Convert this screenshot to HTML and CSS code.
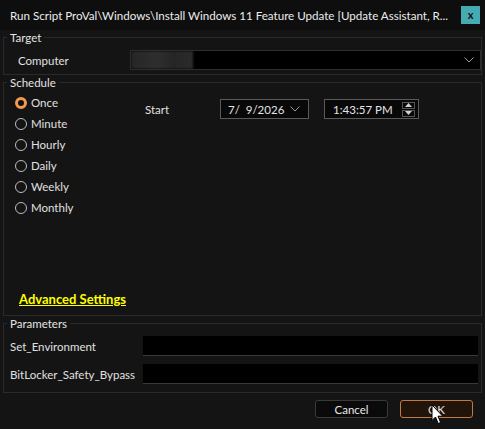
FILE: index.html
```html
<!DOCTYPE html>
<html lang="en">
<head>
    <meta charset="UTF-8">
    <title>Run Script</title>
    <link rel="stylesheet" href="styles.css">
</head>
<body>
    <div class="dialog">
        <!-- Title bar -->
        <div class="titlebar">
            <span class="title">Run Script ProVal\Windows\Install Windows 11 Feature Update [Update Assistant, R...</span>
            <span class="close-btn">x</span>
        </div>

        <!-- Target computer -->
        <fieldset class="group target">
            <legend>Target</legend>
            <div class="row">
                <span class="label computer-label">Computer</span>
                <div class="combo">
                    <span class="combo-value"></span>
                    <svg class="chevron" width="10" height="6" viewBox="0 0 10 6"><path d="M0.5 0.5 L5 5 L9.5 0.5" fill="none" stroke="#9a9a9a" stroke-width="1"/></svg>
                </div>
            </div>
        </fieldset>

        <!-- Schedule options -->
        <fieldset class="group schedule">
            <legend>Schedule</legend>
            <div class="schedule-body">
                <div class="schedule-top">
                    <div class="radios">
                        <label class="radio checked"><span class="dot"></span>Once</label>
                        <label class="radio"><span class="dot"></span>Minute</label>
                        <label class="radio"><span class="dot"></span>Hourly</label>
                        <label class="radio"><span class="dot"></span>Daily</label>
                        <label class="radio"><span class="dot"></span>Weekly</label>
                        <label class="radio"><span class="dot"></span>Monthly</label>
                    </div>
                    <div class="start">
                        <span class="label start-label">Start</span>
                        <div class="picker date">
                            <span>7/&nbsp; 9/2026</span>
                            <svg class="chevron" width="10" height="6" viewBox="0 0 10 6"><path d="M0.5 0.5 L5 5 L9.5 0.5" fill="none" stroke="#9a9a9a" stroke-width="1"/></svg>
                        </div>
                        <div class="picker time">
                            <span>1:43:57 PM</span>
                            <div class="spin">
                                <span class="spin-btn"><svg width="7" height="4" viewBox="0 0 7 4"><path d="M3.5 0 L7 4 L0 4 Z" fill="#d0d0d0"/></svg></span>
                                <span class="spin-btn"><svg width="7" height="4" viewBox="0 0 7 4"><path d="M0 0 L7 0 L3.5 4 Z" fill="#d0d0d0"/></svg></span>
                            </div>
                        </div>
                    </div>
                </div>
                <a class="advanced" href="#">Advanced Settings</a>
            </div>
        </fieldset>

        <!-- Script parameters -->
        <fieldset class="group params">
            <legend>Parameters</legend>
            <div class="param-list">
                <div class="param-row">
                    <span class="label">Set_Environment</span>
                    <div class="field"></div>
                </div>
                <div class="param-row">
                    <span class="label">BitLocker_Safety_Bypass</span>
                    <div class="field"></div>
                </div>
            </div>
        </fieldset>

        <!-- Dialog buttons -->
        <div class="footer">
            <button class="btn cancel">Cancel</button>
            <button class="btn ok">OK</button>
        </div>

        <!-- Mouse pointer resting on OK -->
        <svg class="pointer" width="13" height="21" viewBox="0 0 13 21">
            <path d="M1 1 L1 16.5 L4.5 13 L7.2 19.5 L9.6 18.5 L7 12.2 L11.8 12.2 Z" fill="#fff" stroke="#000" stroke-width="1" stroke-linejoin="round"/>
        </svg>
    </div>
</body>
</html>
```

FILE: styles.css
```css
body {
    margin: 0;
    background-color: #141414;
    color: #e4e4e4;
    font-family: Lato, 'Segoe UI', sans-serif;
    font-size: 11.5px;
}

.dialog {
    position: relative;
    width: 485px;
    height: 429px;
    display: flex;
    flex-direction: column;
    background-color: #141414;
    overflow: hidden;
}

/* Title bar */
.titlebar {
    height: 30px;
    display: flex;
    align-items: center;
    gap: 4px;
    padding: 0 5px 0 10px;
    background-color: #0e0e0e;
}

.title {
    flex: 1;
    min-width: 0;
    white-space: nowrap;
    color: #ececec;
    font-size: 11.6px;
}

.close-btn {
    flex: none;
    width: 19px;
    height: 18px;
    display: flex;
    align-items: center;
    justify-content: center;
    background-color: #46aab2;
    color: #101010;
    font-weight: bold;
    font-size: 11px;
    line-height: 1;
    padding-bottom: 2px;
    box-sizing: border-box;
}

/* Group boxes */
.group {
    margin: 0 3px 0 3px;
    padding: 0;
    border: 1px solid #2a2a2a;
    min-width: 0;
}

.group legend {
    margin-left: 3px;
    padding: 0 3px;
    line-height: 15px;
    color: #e4e4e4;
}

.label {
    color: #e0e0e0;
    white-space: nowrap;
}

/* Target */
.target .row {
    display: flex;
    align-items: center;
    padding: 5px 0 4px 14px;
}

.computer-label {
    width: 112px;
}

.combo {
    flex: 1;
    height: 20px;
    display: flex;
    align-items: center;
    justify-content: flex-end;
    background-color: #000;
    border: 1px solid #2e2e2e;
    box-sizing: border-box;
    padding-right: 6px;
    position: relative;
}

.combo-value {
    position: absolute;
    left: 0;
    top: 0;
    bottom: 0;
    width: 62px;
    background: linear-gradient(90deg, #262626 0%, #2e2e2e 40%, #262626 70%, #2b2b2b 100%);
    filter: blur(1px);
}

/* Schedule */
.schedule-body {
    height: 215px;
    display: flex;
    flex-direction: column;
    padding: 2px 0 8px 0;
}

.schedule-top {
    display: flex;
}

.radios {
    width: 130px;
    display: flex;
    flex-direction: column;
    padding-left: 11px;
}

.radio {
    height: 21px;
    display: flex;
    align-items: center;
    gap: 4px;
    color: #e0e0e0;
}

.dot {
    width: 12px;
    height: 12px;
    border: 1px solid #bdbdbd;
    border-radius: 50%;
    box-sizing: border-box;
}

.radio.checked .dot {
    border: 3.5px solid #f29b4e;
    background-color: #111;
}

.start {
    display: flex;
    align-items: center;
    height: 20px;
    margin-top: 7px;
}

.start-label {
    width: 75px;
}

.picker {
    height: 20px;
    display: flex;
    align-items: center;
    justify-content: space-between;
    border: 1px solid #5a5a5a;
    box-sizing: border-box;
    background-color: #080808;
    color: #e4e4e4;
}

.picker.date {
    width: 89px;
    padding: 0 8px 0 7px;
    margin-right: 15px;
}

.picker.time {
    width: 95px;
    padding: 0 3px 0 8px;
}

.spin {
    display: flex;
    flex-direction: column;
    gap: 1px;
}

.spin-btn {
    width: 13px;
    height: 7px;
    display: flex;
    align-items: center;
    justify-content: center;
    border: 1px solid #555;
    box-sizing: border-box;
}

.advanced {
    margin-top: auto;
    margin-left: 15px;
    color: #ffff00;
    font-size: 13px;
    font-weight: bold;
    line-height: 15px;
    text-decoration: underline;
    align-self: flex-start;
}

/* Parameters */
.param-list {
    padding: 5px 3px 8px 6px;
}

.param-row {
    display: flex;
    align-items: center;
    height: 20px;
}

.param-row + .param-row {
    margin-top: 8px;
}

.param-row .label {
    width: 133px;
}

.field {
    flex: 1;
    height: 20px;
    background-color: #000;
    border-bottom: 1px solid #3a3a3a;
    box-sizing: border-box;
}

/* Footer buttons */
.footer {
    display: flex;
    justify-content: flex-end;
    gap: 12px;
    padding: 7px 12px 0 0;
}

.btn {
    width: 73px;
    height: 18px;
    padding: 0;
    font-family: inherit;
    font-size: 11.5px;
    color: #e8e8e8;
    border-radius: 3px;
    box-sizing: border-box;
}

.btn.cancel {
    background-color: #0a0a0a;
    border: 1px solid #3a3a3a;
}

.btn.ok {
    background-color: #23140a;
    border: 1px solid #c27a44;
}

.pointer {
    position: absolute;
    left: 431px;
    top: 404px;
}
```
